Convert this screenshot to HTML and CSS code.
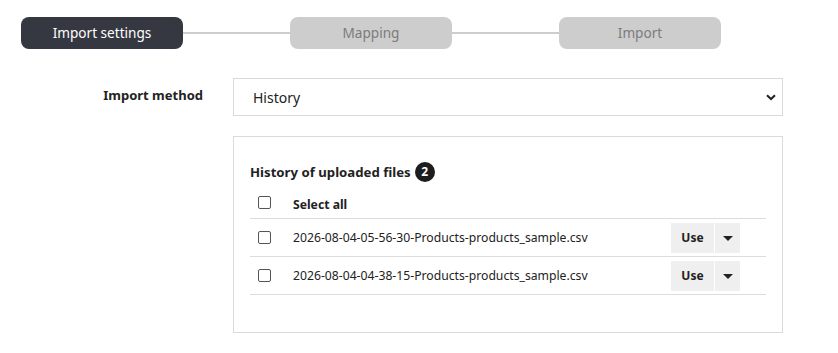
FILE: index.html
```html
<!DOCTYPE html>
<html lang="en">

<head>
    <meta charset="UTF-8">
    <title>Import</title>
    <link rel="stylesheet" href="styles.css">
</head>

<body>
    <div class="steps">
        <div class="step active">Import settings</div>
        <div class="step-line"></div>
        <div class="step">Mapping</div>
        <div class="step-line"></div>
        <div class="step">Import</div>
    </div>

    <div class="form-row">
        <label class="form-label" for="method">Import method</label>
        <div class="form-field">
            <div class="select-wrap">
                <select id="method" class="select">
                    <option>History</option>
                </select>
                <svg class="select-arrow" width="10" height="7" viewBox="0 0 10 7">
                    <path d="M1 1.2 L5 5 L9 1.2" fill="none" stroke="#222" stroke-width="2"/>
                </svg>
            </div>

            <div class="panel">
                <h3 class="panel-title">History of uploaded files <span class="badge">2</span></h3>
                <table class="files">
                    <tr class="head">
                        <td class="check"><input type="checkbox"></td>
                        <td>Select all</td>
                        <td></td>
                    </tr>
                    <tr>
                        <td class="check"><input type="checkbox"></td>
                        <td>2026-08-04-05-56-30-Products-products_sample.csv</td>
                        <td class="actions">
                            <div class="btn-group">
                                <button class="btn">Use</button>
                                <button class="btn caret"><span></span></button>
                            </div>
                        </td>
                    </tr>
                    <tr>
                        <td class="check"><input type="checkbox"></td>
                        <td>2026-08-04-04-38-15-Products-products_sample.csv</td>
                        <td class="actions">
                            <div class="btn-group">
                                <button class="btn">Use</button>
                                <button class="btn caret"><span></span></button>
                            </div>
                        </td>
                    </tr>
                </table>
            </div>
        </div>
    </div>
</body>

</html>
```

FILE: styles.css
```css
body {
    font-family: "Noto Sans", Arial, sans-serif;
    margin: 0;
    padding: 0;
    background-color: #fff;
    color: #222;
}

.steps {
    display: flex;
    align-items: center;
    padding: 17px 0 0 21px;
}

.step {
    width: 162px;
    height: 32px;
    line-height: 31px;
    border-radius: 8px;
    background-color: #cdcdcd;
    color: #7c7c7c;
    font-size: 13.6px;
    text-align: center;
}

.step.active {
    background-color: #353841;
    color: #fff;
}

.step-line {
    width: 107px;
    height: 2px;
    background-color: #cdcdcd;
}

.form-row {
    display: flex;
    margin-top: 29px;
}

.form-label {
    width: 233px;
    padding-right: 30px;
    box-sizing: border-box;
    text-align: right;
    font-size: 13px;
    font-weight: bold;
    padding-top: 8px;
    color: #222;
}

.form-field {
    width: 550px;
}

.select-wrap {
    position: relative;
}

.select {
    display: block;
    width: 100%;
    height: 38px;
    padding: 0 19px;
    border: 1px solid #dadada;
    border-radius: 0;
    background: #fff;
    font-family: inherit;
    font-size: 14px;
    color: #222;
    appearance: none;
    -webkit-appearance: none;
}

.select-arrow {
    position: absolute;
    right: 7px;
    top: 16px;
}

.panel {
    margin-top: 20px;
    border: 1px solid #dadada;
    padding: 25px 16px 37px 16px;
}

.panel-title {
    margin: 0 0 12px 0;
    font-size: 13.2px;
    font-weight: bold;
    display: flex;
    align-items: center;
    gap: 4px;
}

.badge {
    display: inline-block;
    width: 20px;
    height: 20px;
    line-height: 20px;
    border-radius: 50%;
    background-color: #1d1d1f;
    color: #fff;
    font-size: 12px;
    text-align: center;
}

.files {
    width: 100%;
    border-collapse: collapse;
    font-size: 12.2px;
}

.files td {
    border-bottom: 1px solid #dcdcdc;
    padding: 0;
    height: 37px;
}

.files tr.head td {
    height: 22px;
    font-weight: bold;
    vertical-align: top;
    padding-top: 2px;
}

.files td.check {
    width: 35px;
    padding-left: 8px;
}

.files input[type="checkbox"] {
    appearance: none;
    -webkit-appearance: none;
    width: 13px;
    height: 13px;
    border: 1px solid #555;
    border-radius: 2px;
    margin: 0;
    display: block;
    background: #fff;
}

.files td.actions {
    text-align: right;
    padding-right: 26px;
}

.btn-group {
    display: inline-flex;
    gap: 1px;
}

.btn {
    height: 30px;
    border: none;
    background-color: #efefef;
    font-family: inherit;
    font-size: 12px;
    font-weight: bold;
    color: #222;
    padding: 0;
    width: 43px;
    cursor: pointer;
}

.btn.caret {
    width: 25px;
}

.btn.caret span {
    display: inline-block;
    border-left: 5px solid transparent;
    border-right: 5px solid transparent;
    border-top: 5px solid #222;
    vertical-align: middle;
}
```
